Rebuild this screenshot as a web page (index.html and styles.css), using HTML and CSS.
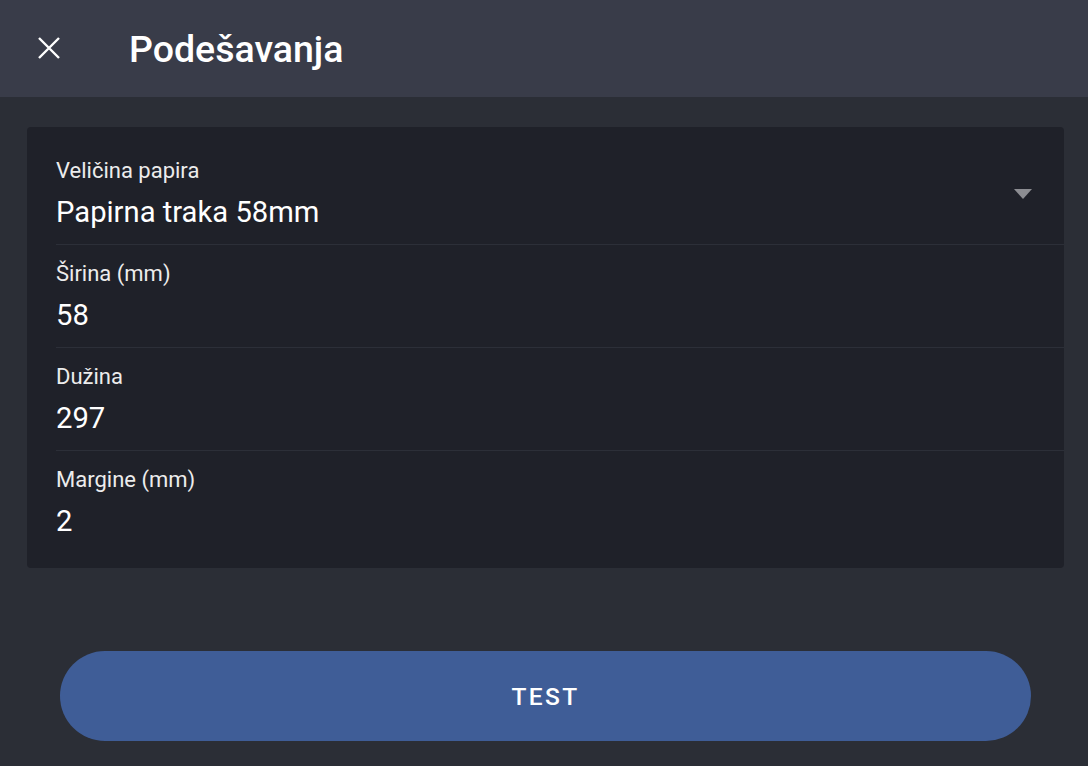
FILE: index.html
```html
<!DOCTYPE html>
<html lang="sr">
<head>
<meta charset="utf-8">
<title>Podešavanja</title>
<link rel="stylesheet" href="styles.css">
</head>
<body>
<header class="topbar">
  <button class="close-btn" aria-label="Zatvori">
    <svg width="22" height="22" viewBox="0 0 22 22"><path d="M1 1 L21 21 M21 1 L1 21" stroke="#fff" stroke-width="2.4" fill="none"/></svg>
  </button>
  <h1 class="title">Podešavanja</h1>
</header>
<main class="content">
  <section class="card">
    <div class="row row-select">
      <div class="field">
        <div class="label">Veličina papira</div>
        <div class="value">Papirna traka 58mm</div>
      </div>
      <span class="caret"></span>
    </div>
    <div class="row">
      <div class="field">
        <div class="label">Širina (mm)</div>
        <div class="value">58</div>
      </div>
    </div>
    <div class="row">
      <div class="field">
        <div class="label">Dužina</div>
        <div class="value">297</div>
      </div>
    </div>
    <div class="row row-last">
      <div class="field">
        <div class="label">Margine (mm)</div>
        <div class="value">2</div>
      </div>
    </div>
  </section>
  <button class="test-btn">TEST</button>
</main>
</body>
</html>
```
FILE: styles.css
```css
* { box-sizing: border-box; }
html, body {
  margin: 0;
  padding: 0;
  height: 100%;
}
body {
  background: #2b2e36;
  font-family: Roboto, "Noto Sans", sans-serif;
  color: #fff;
  overflow: hidden;
}
.topbar {
  height: 97px;
  background: #393c49;
  display: flex;
  align-items: center;
  padding-left: 38px;
}
.close-btn {
  background: none;
  border: 0;
  padding: 0;
  width: 22px;
  height: 22px;
  display: flex;
  margin-top: -2px;
}
.title {
  margin: 0 0 0 69px;
  font-size: 37.5px;
  line-height: 42px;
  font-weight: 500;
  color: #fff;
}
.content {
  padding: 30px 24px 0 27px;
  display: flex;
  flex-direction: column;
}
.card {
  background: #1f2129;
  border-radius: 4px;
  padding: 15px 0 15px 29px;
}
.row {
  display: flex;
  align-items: center;
  padding: 17px 0 16px 0;
  border-bottom: 1px solid #2c2f38;
}
.row-last { border-bottom: 0; }
.field { flex: 1; }
.label {
  font-size: 22px;
  line-height: 24px;
  color: #ececec;
}
.value {
  margin-top: 13px;
  font-size: 29.2px;
  line-height: 32px;
  color: #fff;
}
.caret {
  width: 0;
  height: 0;
  border-left: 9px solid transparent;
  border-right: 9px solid transparent;
  border-top: 10px solid #8c8d92;
  margin-right: 32px;
}
.test-btn {
  margin: 83px 33px 0 33px;
  height: 90px;
  border: 0;
  border-radius: 45px;
  background: #3f5d97;
  color: #fff;
  font-family: Roboto, "Noto Sans", sans-serif;
  font-size: 24.5px;
  font-weight: 500;
  letter-spacing: 2.4px;
  padding: 0;
}
```
